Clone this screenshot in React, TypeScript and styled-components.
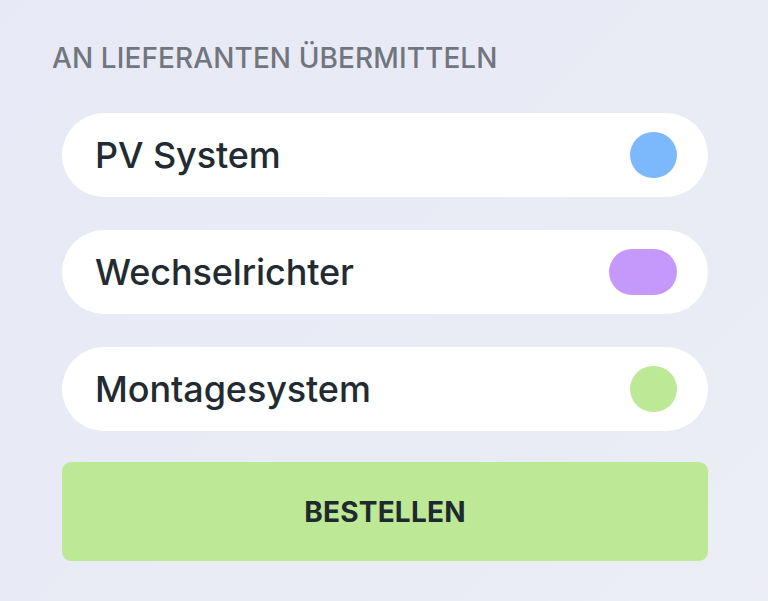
import React from "react";
import styled, { createGlobalStyle } from "styled-components";

const Global = createGlobalStyle`
  html, body { margin: 0; padding: 0; }
  body {
    background: linear-gradient(135deg, #e7e9f6 0%, #e9ebf5 60%, #eceef4 100%);
    font-family: Inter, "Noto Sans", sans-serif;
    width: 768px;
    height: 601px;
    overflow: hidden;
  }
`;

const Page = styled.main`
  display: flex;
  flex-direction: column;
  padding: 40px 60px 0 62px;
  box-sizing: border-box;
  width: 768px;
`;

const Heading = styled.h2`
  margin: 0 0 0 -10px;
  font-size: 28px;
  font-weight: 500;
  color: #71767e;
  letter-spacing: 0.1px;
  line-height: 36px;
`;

const List = styled.div`
  display: flex;
  flex-direction: column;
  gap: 33px;
  margin-top: 37px;
`;

const Row = styled.div`
  display: flex;
  align-items: center;
  justify-content: space-between;
  height: 84px;
  background: #ffffff;
  border-radius: 42px;
  padding: 0 31px 0 33px;
`;

const Label = styled.span`
  font-size: 36px;
  font-weight: 500;
  color: #222b31;
  letter-spacing: -0.1px;
`;

const Dot = styled.span<{ $color: string; $w: number }>`
  display: block;
  width: ${(p) => p.$w}px;
  height: 46px;
  border-radius: 23px;
  background: ${(p) => p.$color};
`;

const OrderButton = styled.button`
  margin-top: 31px;
  height: 99px;
  border: none;
  border-radius: 9px;
  background: #bde996;
  font-family: Inter, "Noto Sans", sans-serif;
  font-size: 28px;
  font-weight: 700;
  color: #1f2a2f;
  letter-spacing: 0.2px;
`;

const items = [
  { label: "PV System", color: "#7cb9fc", w: 47 },
  { label: "Wechselrichter", color: "#c598fb", w: 68 },
  { label: "Montagesystem", color: "#bde896", w: 47 },
];

export default function App() {
  return (
    <>
      <Global />
      <Page>
        <Heading>AN LIEFERANTEN ÜBERMITTELN</Heading>
        <List>
          {items.map((it) => (
            <Row key={it.label}>
              <Label>{it.label}</Label>
              <Dot $color={it.color} $w={it.w} />
            </Row>
          ))}
        </List>
        <OrderButton>BESTELLEN</OrderButton>
      </Page>
    </>
  );
}
